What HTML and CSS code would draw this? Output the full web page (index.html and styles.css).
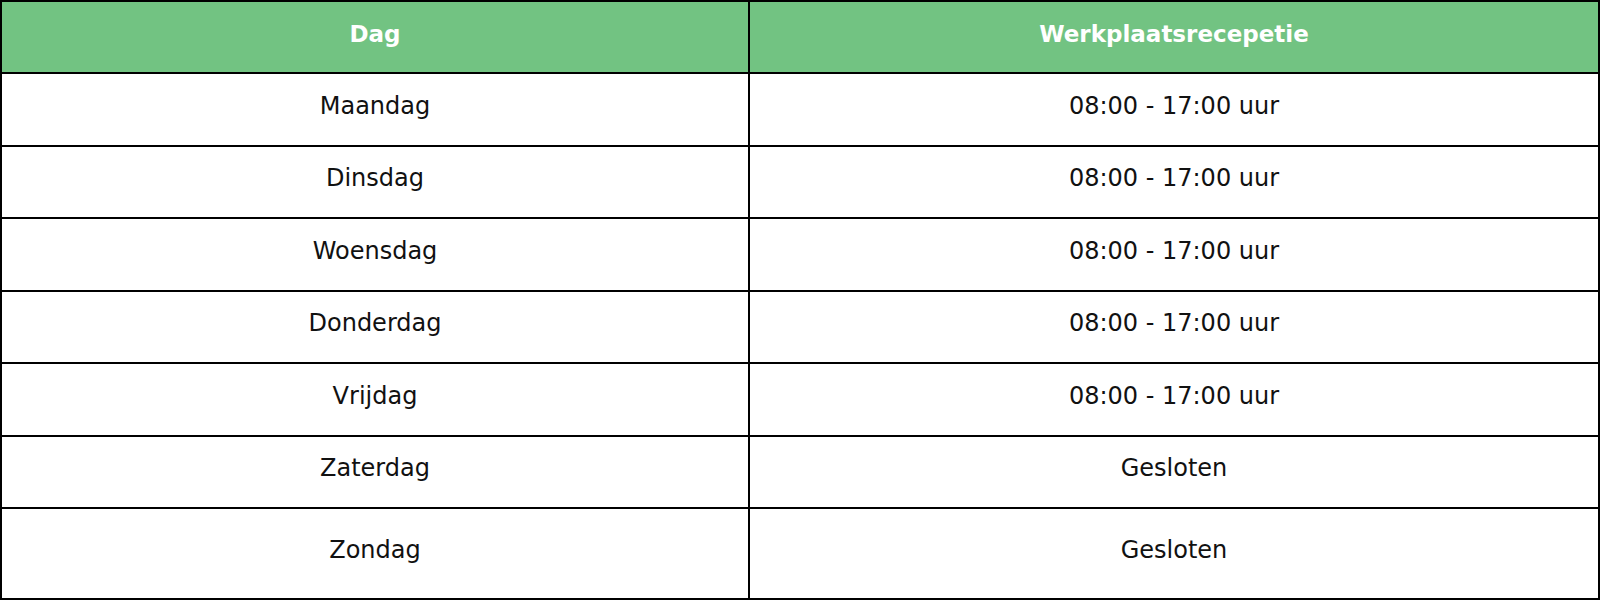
FILE: index.html
```html
<!DOCTYPE html>
<html lang="nl">
<head>
<meta charset="utf-8">
<title>Openingstijden</title>
<link rel="stylesheet" href="styles.css">
</head>
<body>
<table class="hours">
  <colgroup>
    <col class="col-day">
    <col class="col-time">
  </colgroup>
  <thead>
    <tr class="head-row">
      <th class="cell cell-day">Dag</th>
      <th class="cell">Werkplaatsrecepetie</th>
    </tr>
  </thead>
  <tbody>
    <tr class="row row-a"><td class="cell cell-day">Maandag</td><td class="cell">08:00 - 17:00 uur</td></tr>
    <tr class="row row-b"><td class="cell cell-day">Dinsdag</td><td class="cell">08:00 - 17:00 uur</td></tr>
    <tr class="row row-a"><td class="cell cell-day">Woensdag</td><td class="cell">08:00 - 17:00 uur</td></tr>
    <tr class="row row-b"><td class="cell cell-day">Donderdag</td><td class="cell">08:00 - 17:00 uur</td></tr>
    <tr class="row row-a"><td class="cell cell-day">Vrijdag</td><td class="cell">08:00 - 17:00 uur</td></tr>
    <tr class="row row-b"><td class="cell cell-day">Zaterdag</td><td class="cell">Gesloten</td></tr>
    <tr class="row row-last"><td class="cell cell-day">Zondag</td><td class="cell">Gesloten</td></tr>
  </tbody>
</table>
</body>
</html>
```

FILE: styles.css
```css
html, body {
  margin: 0;
  padding: 0;
  background: #ffffff;
}

.hours {
  width: 1600px;
  height: 600px;
  box-sizing: border-box;
  border: 2px solid #000;
  border-collapse: separate;
  border-spacing: 0;
  table-layout: fixed;
  font-family: "DejaVu Sans", "Liberation Sans", sans-serif;
  color: #111;
}

.col-day { width: 748px; }
.col-time { width: auto; }

.cell {
  box-sizing: border-box;
  padding: 0 0 8px 0;
  text-align: center;
  vertical-align: middle;
  border-bottom: 2px solid #000;
  font-size: 24px;
  font-weight: 400;
}

.cell-day {
  border-right: 2px solid #000;
}

.head-row .cell {
  background: #72c382;
  color: #ffffff;
  font-weight: 700;
  font-size: 23px;
  height: 72px;
  padding-bottom: 6px;
}

.row-a .cell { height: 73px; }
.row-b .cell { height: 72px; }

.row-last .cell {
  height: 89px;
  border-bottom: 0;
}
```
